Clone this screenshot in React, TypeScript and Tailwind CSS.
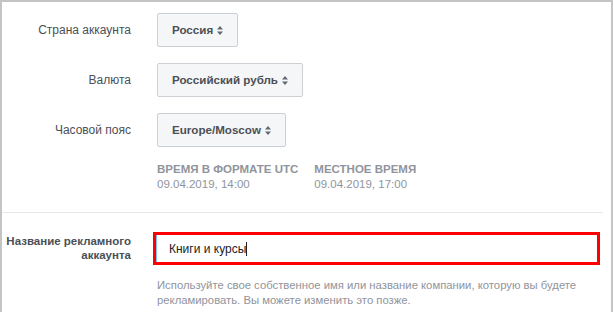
import { ReactNode } from "react";

const Arrows = () => (
  <svg width="6" height="9" viewBox="0 0 6 9" className="ml-[4px] mt-[1px]">
    <path d="M3 0 L6 3.5 H0 Z" fill="#606770" />
    <path d="M3 9 L6 5.5 H0 Z" fill="#606770" />
  </svg>
);

const SelectButton = ({ children }: { children: ReactNode }) => (
  <button className="h-[34px] px-[14px] flex items-center rounded-[2px] border border-[#ccd0d5] bg-[#f5f6f7] text-[11.6px] font-bold text-[#4b4f56]">
    {children}
    <Arrows />
  </button>
);

const Row = ({ label, children }: { label: string; children: ReactNode }) => (
  <div className="flex items-center">
    <div className="w-[129px] text-right text-[12px] text-[#4b4f56]">{label}</div>
    <div className="ml-[26px]">{children}</div>
  </div>
);

export default function App() {
  return (
    <div
      className="w-[613px] h-[312px] overflow-hidden bg-white border-l-2 border-t-2 border-r-2 border-[#c4c4c4]"
      style={{ fontFamily: '"Liberation Sans", Arial, sans-serif' }}
    >
      <div className="pt-[11px] flex flex-col gap-[16px]">
        <Row label="Страна аккаунта">
          <SelectButton>Россия</SelectButton>
        </Row>
        <Row label="Валюта">
          <SelectButton>Российский рубль</SelectButton>
        </Row>
        <Row label="Часовой пояс">
          <SelectButton>Europe/Moscow</SelectButton>
        </Row>
      </div>

      <div className="ml-[155px] mt-[15px] flex gap-[16px] text-[11.5px] leading-[15px] text-[#90949c]">
        <div>
          <div className="font-bold">ВРЕМЯ В ФОРМАТЕ UTC</div>
          <div>09.04.2019, 14:00</div>
        </div>
        <div>
          <div className="font-bold">МЕСТНОЕ ВРЕМЯ</div>
          <div>09.04.2019, 17:00</div>
        </div>
      </div>

      <div className="mt-[20px] mr-[8px] h-px bg-[#e5e6e9]" />

      <div className="mt-[19px] flex items-start">
        <div className="w-[129px] pt-[2px] text-right text-[11.5px] leading-[14px] font-bold text-[#4b4f56]">
          Название рекламного
          <br />
          аккаунта
        </div>
        <div className="ml-[22px] w-[447px]">
          <div className="h-[33px] border-[3px] border-[#ff0000] shadow-[inset_1px_0_0_#7fc1f2] flex items-center pl-[13px] text-[12px] text-[#1d2129]">
            Книги и курсы<span className="w-px h-[14px] bg-[#1d2129]" />
          </div>
          <div className="mt-[13px] pl-[4px] text-[11.3px] leading-[15px] text-[#90949c]">
            Используйте свое собственное имя или название компании, которую вы будете рекламировать. Вы можете изменить это позже.
          </div>
        </div>
      </div>
    </div>
  );
}
